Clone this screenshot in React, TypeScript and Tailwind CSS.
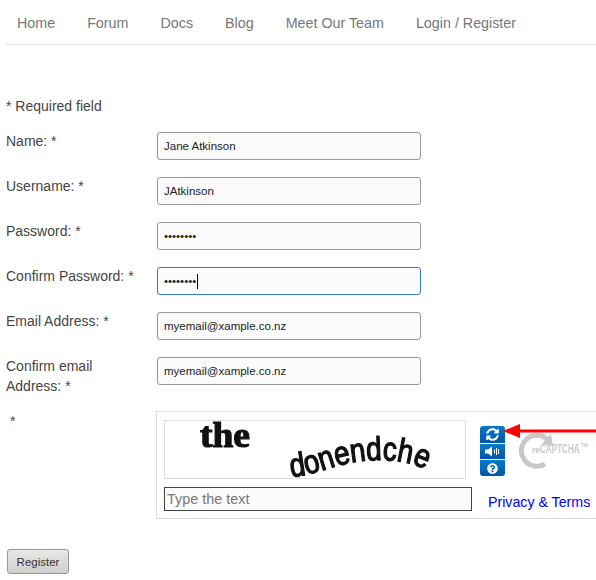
import React from "react";
import { FaQuestionCircle, FaSyncAlt } from "react-icons/fa";

const links = ["Home", "Forum", "Docs", "Blog", "Meet Our Team", "Login / Register"];

const fields = [
  { label: "Name: *", value: "Jane Atkinson" },
  { label: "Username: *", value: "JAtkinson" },
  { label: "Password: *", value: "••••••••" },
  { label: "Confirm Password: *", value: "••••••••", focused: true },
  { label: "Email Address: *", value: "myemail@xample.co.nz" },
  { label: "Confirm email Address: *", value: "myemail@xample.co.nz" },
];

function Field({ label, value, focused }: { label: string; value: string; focused?: boolean }) {
  return (
    <div className="flex items-start mb-[15px] min-h-[30px]">
      <div className="w-[151px] pr-2 text-[14px] leading-[20px] text-[#444]">{label}</div>
      <div
        className={`mt-px w-[264px] h-[28px] rounded-[3px] border bg-[#fbfbfb] pl-[6px] pt-[2px] flex items-center text-[#222] ${
          focused ? "border-[#3b78c0]" : "border-[#999]"
        }`}
      >
        <span className="text-[11.5px]">{value}</span>
        {focused && <span className="ml-px -mt-[2px] w-px h-[15px] bg-black" />}
      </div>
    </div>
  );
}

function CaptchaImage() {
  return (
    <div className="w-[302px] h-[59px] border border-[#ddd]">
      <svg width="300" height="57" viewBox="0 0 300 57" className="blur-[0.5px] overflow-visible">
        <text
          x="35"
          y="26"
          textLength="50"
          lengthAdjust="spacingAndGlyphs"
          fontFamily="'Liberation Serif', serif"
          fontWeight="700"
          fontSize="36"
          fill="#111"
          stroke="#111"
          strokeWidth="1.2"
        >
          the
        </text>
        <path id="captcha-wave" d="M126 56 C150 54 170 44 185 42 C205 38 240 36 263 50" fill="none" />
        <text fontFamily="'Liberation Sans', sans-serif" fontSize="33" fill="#111" stroke="#111" strokeWidth="1.3">
          <textPath href="#captcha-wave" textLength="138" lengthAdjust="spacingAndGlyphs">
            donendche
          </textPath>
        </text>
      </svg>
    </div>
  );
}

function RecaptchaLogo() {
  return (
    <div className="relative ml-[14px] mt-[11px] w-[80px] h-[40px]">
      <svg width="40" height="40" viewBox="0 0 40 40" className="block">
        <path d="M28 8 A15.5 15.5 0 1 0 26 33" fill="none" stroke="#c8c8c8" strokeWidth="5" />
        <path d="M23 13 L34 15 L32 3 Z" fill="#c8c8c8" />
      </svg>
      <div className="absolute left-[13px] top-[12px] flex items-baseline font-bold text-[#c8c8c8] leading-none whitespace-nowrap">
        <span className="text-[8.5px]">re</span>
        <span className="w-[62px] -mr-[21px] text-[12.5px] scale-x-[0.65] origin-left">CAPTCHA</span>
        <span className="text-[5px] self-start">TM</span>
      </div>
    </div>
  );
}

export default function App() {
  return (
    <div className="relative w-[596px] h-[580px] overflow-hidden bg-white font-['Liberation_Sans',Arial,sans-serif]">
      <nav className="ml-[6px] h-[45px] border-b border-[#ddd] flex items-center pl-[11px] pt-[3px] gap-[32px] text-[14.3px] text-[#777]">
        {links.map((link) => (
          <a key={link}>{link}</a>
        ))}
      </nav>

      <form className="pl-[6px] pt-[51px]">
        <p className="text-[14px] leading-[20px] text-[#444] mb-[15px]">* Required field</p>

        {fields.map((f) => (
          <Field key={f.label} {...f} />
        ))}

        <div className="flex items-start">
          <div className="w-[150px] shrink-0 pl-1 text-[14px] leading-[20px] text-[#444]">*</div>
          <div className="w-[460px] shrink-0 h-[108px] border border-[#ddd] pl-[7px] pt-2 flex">
            <div className="w-[308px]">
              <CaptchaImage />
              <div className="mt-2 w-[308px] h-[24px] border border-[#444] bg-[#fbfbfb] pl-[2px] text-[14.4px] leading-[22px] text-[#777]">
                Type the text
              </div>
            </div>
            <div className="ml-2">
              <div className="flex items-start">
                <div className="mt-[6px] w-[25px] flex flex-col gap-px text-white rounded-[3px] overflow-hidden">
                  <div className="h-[17px] flex items-center justify-center bg-gradient-to-b from-[#0a78c8] to-[#0056a8]">
                    <FaSyncAlt size={13} />
                  </div>
                  <div className="h-[15px] flex items-center justify-center bg-gradient-to-b from-[#0a78c8] to-[#0056a8]">
                    <svg width="15" height="11" viewBox="0 0 15 11" fill="white">
                      <path d="M0 3.5 H3 L7 0.5 V10.5 L3 7.5 H0 Z" />
                      <rect x="9" y="3.5" width="1" height="4" />
                      <rect x="11" y="2" width="1" height="7" />
                      <rect x="13" y="3" width="1" height="5" />
                    </svg>
                  </div>
                  <div className="h-[16px] flex items-center justify-center bg-gradient-to-b from-[#0a78c8] to-[#0056a8]">
                    <FaQuestionCircle size={11} />
                  </div>
                </div>
                <RecaptchaLogo />
              </div>
              <a className="block ml-2 mt-[16px] text-[14.2px] leading-[20px] text-[#0000ee] whitespace-nowrap">
                Privacy &amp; Terms
              </a>
            </div>
          </div>
        </div>

        <button
          type="button"
          className="mt-[30px] ml-px w-[62px] h-[25px] pt-[2px] rounded-[3px] border border-[#999] bg-gradient-to-b from-[#e8e8e8] to-[#cfcfcf] text-[11.5px] text-[#333]"
        >
          Register
        </button>
      </form>

      {/* annotation arrow added over the screenshot */}
      <svg className="absolute left-[500px] top-[420px]" width="96" height="22" viewBox="0 0 96 22">
        <path d="M3 11 L20 4 L20 18 Z" fill="#f00" />
        <rect x="19" y="9.5" width="77" height="3" fill="#f00" />
      </svg>
    </div>
  );
}
